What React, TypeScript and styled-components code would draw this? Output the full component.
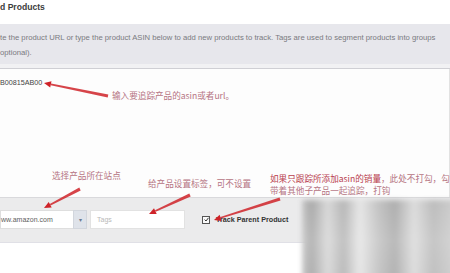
import React from 'react';
import styled, { createGlobalStyle } from 'styled-components';

const GlobalStyle = createGlobalStyle`
  html, body {
    margin: 0;
    padding: 0;
    background: #ffffff;
    overflow: hidden;
  }
  body {
    font-family: "Liberation Sans", Arial, "Noto Sans CJK SC", sans-serif;
  }
`;

const Page = styled.div`
  position: relative;
  width: 450px;
  height: 273px;
  overflow: hidden;
  background: #ffffff;
  display: flex;
  flex-direction: column;
`;

const TitleRow = styled.div`
  height: 24px;
  display: flex;
  align-items: flex-start;
  padding-top: 2px;
  box-sizing: border-box;
`;

const Title = styled.h2`
  margin: 0;
  font-size: 8.6px;
  font-weight: 700;
  color: #3c3c3c;
  line-height: 10px;
`;

const InfoBand = styled.div`
  height: 40px;
  background: #e7e7ec;
  box-sizing: border-box;
  padding-top: 7px;
  font-size: 7.7px;
  line-height: 14.5px;
  color: #7a7a80;
  white-space: nowrap;
`;

const Separator = styled.div`
  height: 4px;
  background: #f1f1f3;
  border-bottom: 1px solid #cfcfd4;
`;

const AsinArea = styled.div`
  flex: 1;
  background: #fdfdfd;
  border-right: 1px solid #e2e2e2;
  box-sizing: border-box;
  padding-top: 9px;
  font-size: 7.2px;
  color: #444444;
  line-height: 10px;
`;

const Toolbar = styled.div`
  height: 46px;
  background: #ebebec;
  border-top: 1px solid #d9d9dc;
  border-bottom: 1px solid #e0e0e6;
  box-sizing: border-box;
  display: flex;
  align-items: flex-start;
  padding-top: 12px;
`;

const SiteSelect = styled.div`
  display: flex;
  height: 19px;
  width: 87px;
`;

const SelectValue = styled.div`
  flex: 1;
  background: #ffffff;
  border: 1px solid #dedede;
  border-right: none;
  display: flex;
  align-items: center;
  font-size: 7px;
  color: #606060;
`;

const SelectButton = styled.div`
  width: 12px;
  background: #dfe3ea;
  border: 1px solid #d2d6dd;
  display: flex;
  align-items: center;
  justify-content: center;
  color: #6a7a90;
  font-size: 6px;
`;

const TagsInput = styled.div`
  width: 95px;
  height: 19px;
  margin-left: 3px;
  background: #ffffff;
  border: 1px solid #e2e2e2;
  box-sizing: border-box;
  display: flex;
  align-items: center;
  padding-left: 6px;
  font-size: 7px;
  color: #b8b8b8;
`;

const CheckLabel = styled.label`
  display: flex;
  align-items: center;
  height: 19px;
  margin-left: 17px;
  font-size: 7.2px;
  font-weight: 700;
  color: #333333;
  white-space: nowrap;
`;

const CheckBox = styled.span`
  width: 6px;
  height: 6px;
  border: 1px solid #555;
  background: #fafafa;
  margin-right: 6px;
  display: flex;
  align-items: center;
  justify-content: center;
`;

const BottomSpace = styled.div`
  height: 30px;
  background: #ffffff;
`;

const Note = styled.div<{ $x: number; $y: number }>`
  position: absolute;
  left: ${({ $x }) => $x}px;
  top: ${({ $y }) => $y}px;
  font-family: "Noto Sans CJK SC", "Liberation Sans", sans-serif;
  font-size: 8.6px;
  line-height: 12px;
  color: #b57482;
  white-space: nowrap;
  text-shadow: 0 0 1px rgba(255, 255, 255, 0.9);
`;

const Strong = styled.span`
  color: #b8404f;
`;

const Watermark = styled.div`
  position: absolute;
  left: 302px;
  top: 200px;
  width: 160px;
  height: 80px;
  filter: blur(2.5px);
  background:
    linear-gradient(180deg, rgba(255,255,255,0) 0%, rgba(255,255,255,0.15) 50%, rgba(255,255,255,0.05) 100%),
    linear-gradient(90deg, #c4c4c4 0%, #a9a9a9 6%, #d8d8d8 16%, #b6b6b6 26%, #e6e6e6 36%, #c2c2c2 48%, #adadad 58%, #dcdcdc 70%, #bcbcbc 82%, #d4d4d4 100%);
`;

const Overlay = styled.svg`
  position: absolute;
  left: 0;
  top: 0;
  pointer-events: none;
`;

type Pt = [number, number];

const arrowPoints = (head: Pt, tail: Pt) => {
  const dx = tail[0] - head[0];
  const dy = tail[1] - head[1];
  const len = Math.hypot(dx, dy);
  const ux = dx / len;
  const uy = dy / len;
  const nx = -uy;
  const ny = ux;
  const hl = 7;
  const hw = 3.2;
  const b: Pt = [head[0] + ux * hl, head[1] + uy * hl];
  const tri = [
    head,
    [b[0] + nx * hw, b[1] + ny * hw],
    [b[0] - nx * hw, b[1] - ny * hw],
  ];
  const shaft = [
    [b[0] + nx * 0.8, b[1] + ny * 0.8],
    [tail[0] + nx * 1.6, tail[1] + ny * 1.6],
    [tail[0] - nx * 1.6, tail[1] - ny * 1.6],
    [b[0] - nx * 0.8, b[1] - ny * 0.8],
  ];
  const fmt = (ps: number[][]) => ps.map((p) => `${p[0].toFixed(1)},${p[1].toFixed(1)}`).join(' ');
  return { tri: fmt(tri), shaft: fmt(shaft) };
};

const arrows: { head: Pt; tail: Pt }[] = [
  { head: [44, 83], tail: [108, 96] },
  { head: [44, 208], tail: [80, 189] },
  { head: [149, 214], tail: [190, 195] },
  { head: [214, 220], tail: [280, 199] },
];

const Arrows: React.FC = () => (
  <Overlay width={450} height={273} viewBox="0 0 450 273">
    {arrows.map((a, i) => {
      const p = arrowPoints(a.head, a.tail);
      return (
        <g key={i} fill="#cf2329">
          <polygon points={p.shaft} opacity={0.85} />
          <polygon points={p.tri} />
        </g>
      );
    })}
  </Overlay>
);

const App: React.FC = () => (
  <>
    <GlobalStyle />
    <Page>
      <TitleRow>
        <Title>d Products</Title>
      </TitleRow>
      <InfoBand>
        <div>te the product URL or type the product ASIN below to add new products to track. Tags are used to segment products into groups</div>
        <div>optional).</div>
      </InfoBand>
      <Separator />
      <AsinArea>B00815AB00</AsinArea>
      <Toolbar>
        <SiteSelect>
          <SelectValue>ww.amazon.com</SelectValue>
          <SelectButton>▾</SelectButton>
        </SiteSelect>
        <TagsInput>Tags</TagsInput>
        <CheckLabel>
          <CheckBox>
            <svg width="5" height="5" viewBox="0 0 5 5">
              <path d="M0.6 2.6 L2 4 L4.5 0.8" fill="none" stroke="#333" strokeWidth="1" />
            </svg>
          </CheckBox>
          Track Parent Product
        </CheckLabel>
      </Toolbar>
      <BottomSpace />

      <Watermark />
      <Note $x={112} $y={89}>输入要追踪产品的asin或者url。</Note>
      <Note $x={52} $y={169}>选择产品所在站点</Note>
      <Note $x={148} $y={177}>给产品设置标签，可不设置</Note>
      <Note $x={270} $y={172}>
        <Strong>如果只跟踪所添加asin的销量</Strong>，此处不打勾，勾
        <br />
        带着其他子产品一起追踪，打钩
      </Note>
      <Arrows />
    </Page>
  </>
);

export default App;
